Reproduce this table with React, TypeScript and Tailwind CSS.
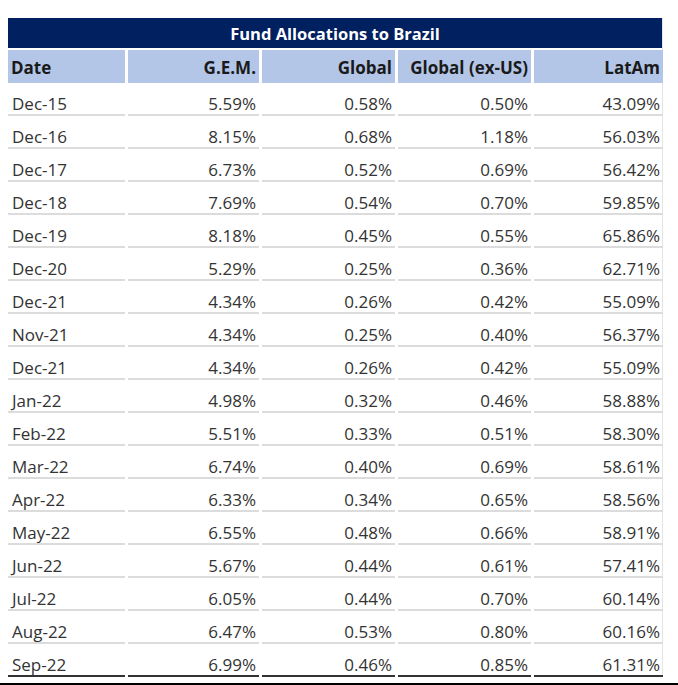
import React from 'react';

type Row = [string, string, string, string, string];

const rows: Row[] = [
    ['Dec-15', '5.59%', '0.58%', '0.50%', '43.09%'],
    ['Dec-16', '8.15%', '0.68%', '1.18%', '56.03%'],
    ['Dec-17', '6.73%', '0.52%', '0.69%', '56.42%'],
    ['Dec-18', '7.69%', '0.54%', '0.70%', '59.85%'],
    ['Dec-19', '8.18%', '0.45%', '0.55%', '65.86%'],
    ['Dec-20', '5.29%', '0.25%', '0.36%', '62.71%'],
    ['Dec-21', '4.34%', '0.26%', '0.42%', '55.09%'],
    ['Nov-21', '4.34%', '0.25%', '0.40%', '56.37%'],
    ['Dec-21', '4.34%', '0.26%', '0.42%', '55.09%'],
    ['Jan-22', '4.98%', '0.32%', '0.46%', '58.88%'],
    ['Feb-22', '5.51%', '0.33%', '0.51%', '58.30%'],
    ['Mar-22', '6.74%', '0.40%', '0.69%', '58.61%'],
    ['Apr-22', '6.33%', '0.34%', '0.65%', '58.56%'],
    ['May-22', '6.55%', '0.48%', '0.66%', '58.91%'],
    ['Jun-22', '5.67%', '0.44%', '0.61%', '57.41%'],
    ['Jul-22', '6.05%', '0.44%', '0.70%', '60.14%'],
    ['Aug-22', '6.47%', '0.53%', '0.80%', '60.16%'],
    ['Sep-22', '6.99%', '0.46%', '0.85%', '61.31%'],
];

const headers = ['Date', 'G.E.M.', 'Global', 'Global (ex-US)', 'LatAm'];

// column template shared by header and body
const cols = 'grid grid-cols-[117px_131px_133px_133px_129px] gap-x-[3px]';

export default function App() {
    return (
        <div className="w-[678px] h-[685px] bg-white flex flex-col font-['Open_Sans',sans-serif] text-[17px] leading-[18px] text-[#333333]">
            <div className="pl-[8px] pt-[18px] flex-1">
                <div className="w-[655px] border-r border-[#e4e4e4]">
                    <div className="h-[30px] bg-[#002060] text-white font-bold text-[16.5px] flex items-center justify-center pt-[2px]">
                        Fund Allocations to Brazil
                    </div>
                    <div className={`${cols} mt-[2px]`}>
                        {headers.map((h, i) => (
                            <div
                                key={h}
                                className={`h-[33px] bg-[#b4c6e7] font-bold text-[#1a1a1a] flex items-end pb-[6px] ${i === 0 ? 'pl-[3px]' : 'justify-end pr-[3px]'}`}
                            >
                                {h}
                            </div>
                        ))}
                    </div>
                    {rows.map((r, ri) => {
                        const last = ri === rows.length - 1;
                        return (
                            <div key={ri} className={cols}>
                                {r.map((v, ci) => (
                                    <div
                                        key={ci}
                                        className={`h-[33px] flex items-end pb-[1px] border-b-2 ${last ? 'border-[#333333]' : 'border-[#dcdcdc]'} ${ci === 0 ? 'pl-[4px]' : 'justify-end pr-[3px]'}`}
                                    >
                                        {v}
                                    </div>
                                ))}
                            </div>
                        );
                    })}
                </div>
            </div>
            <div className="h-[2px] bg-black" />
        </div>
    );
}
